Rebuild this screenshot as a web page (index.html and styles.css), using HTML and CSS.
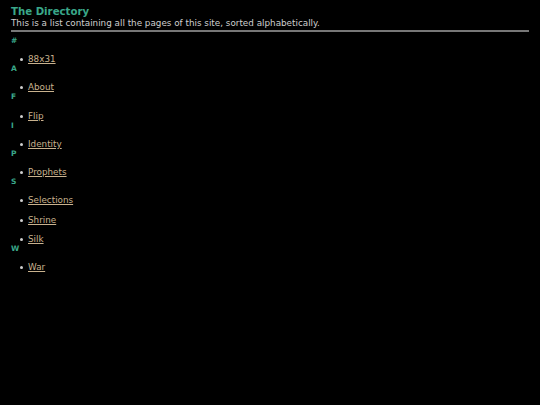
FILE: index.html
```html
<!DOCTYPE html>
<html>
<head>
<meta charset="utf-8">
<title>The Directory</title>
<link rel="stylesheet" href="styles.css">
</head>
<body>
<div class="page">
  <header class="head">
    <h1 class="title">The Directory</h1>
    <p class="sub">This is a list containing all the pages of this site, sorted alphabetically.</p>
  </header>
  <section class="group">
    <h2 class="letter">#</h2>
    <ul class="links"><li><a href="#">88x31</a></li></ul>
  </section>
  <section class="group">
    <h2 class="letter">A</h2>
    <ul class="links"><li><a href="#">About</a></li></ul>
  </section>
  <section class="group">
    <h2 class="letter">F</h2>
    <ul class="links"><li><a href="#">Flip</a></li></ul>
  </section>
  <section class="group">
    <h2 class="letter">I</h2>
    <ul class="links"><li><a href="#">Identity</a></li></ul>
  </section>
  <section class="group">
    <h2 class="letter">P</h2>
    <ul class="links"><li><a href="#">Prophets</a></li></ul>
  </section>
  <section class="group">
    <h2 class="letter">S</h2>
    <ul class="links">
      <li><a href="#">Selections</a></li>
      <li><a href="#">Shrine</a></li>
      <li><a href="#">Silk</a></li>
    </ul>
  </section>
  <section class="group">
    <h2 class="letter">W</h2>
    <ul class="links"><li><a href="#">War</a></li></ul>
  </section>
</div>
</body>
</html>
```

FILE: styles.css
```css
html, body {
  margin: 0;
  background: #000;
}
body {
  font-family: "DejaVu Sans", Verdana, sans-serif;
  color: #c8c8c8;
}
.page {
  padding: 6px 11px 0 11px;
}
.head {
  border-bottom: 2px solid #777;
  padding-bottom: 1px;
}
.title {
  margin: 0;
  font-size: 10.2px;
  line-height: 12px;
  font-weight: bold;
  color: #3aa88a;
}
.sub {
  margin: 0;
  font-size: 8.8px;
  line-height: 11px;
  color: #cfcfcf;
}
.letter {
  margin: 5px 0 0 0;
  font-size: 7.5px;
  line-height: 8.7px;
  font-weight: bold;
  color: #3aa88a;
}
.links {
  margin: 0;
  padding: 0 0 0 9px;
  list-style: none;
  font-size: 8.8px;
}
.links li {
  display: flex;
  align-items: center;
  gap: 5px;
  margin-top: 8.5px;
  line-height: 11px;
}
.links li::before {
  content: "";
  width: 3px;
  height: 3px;
  border-radius: 50%;
  background: #cfcfcf;
}
.links a {
  color: #c9b28e;
}
.group + .group .letter {
  margin-top: 0;
}
```
